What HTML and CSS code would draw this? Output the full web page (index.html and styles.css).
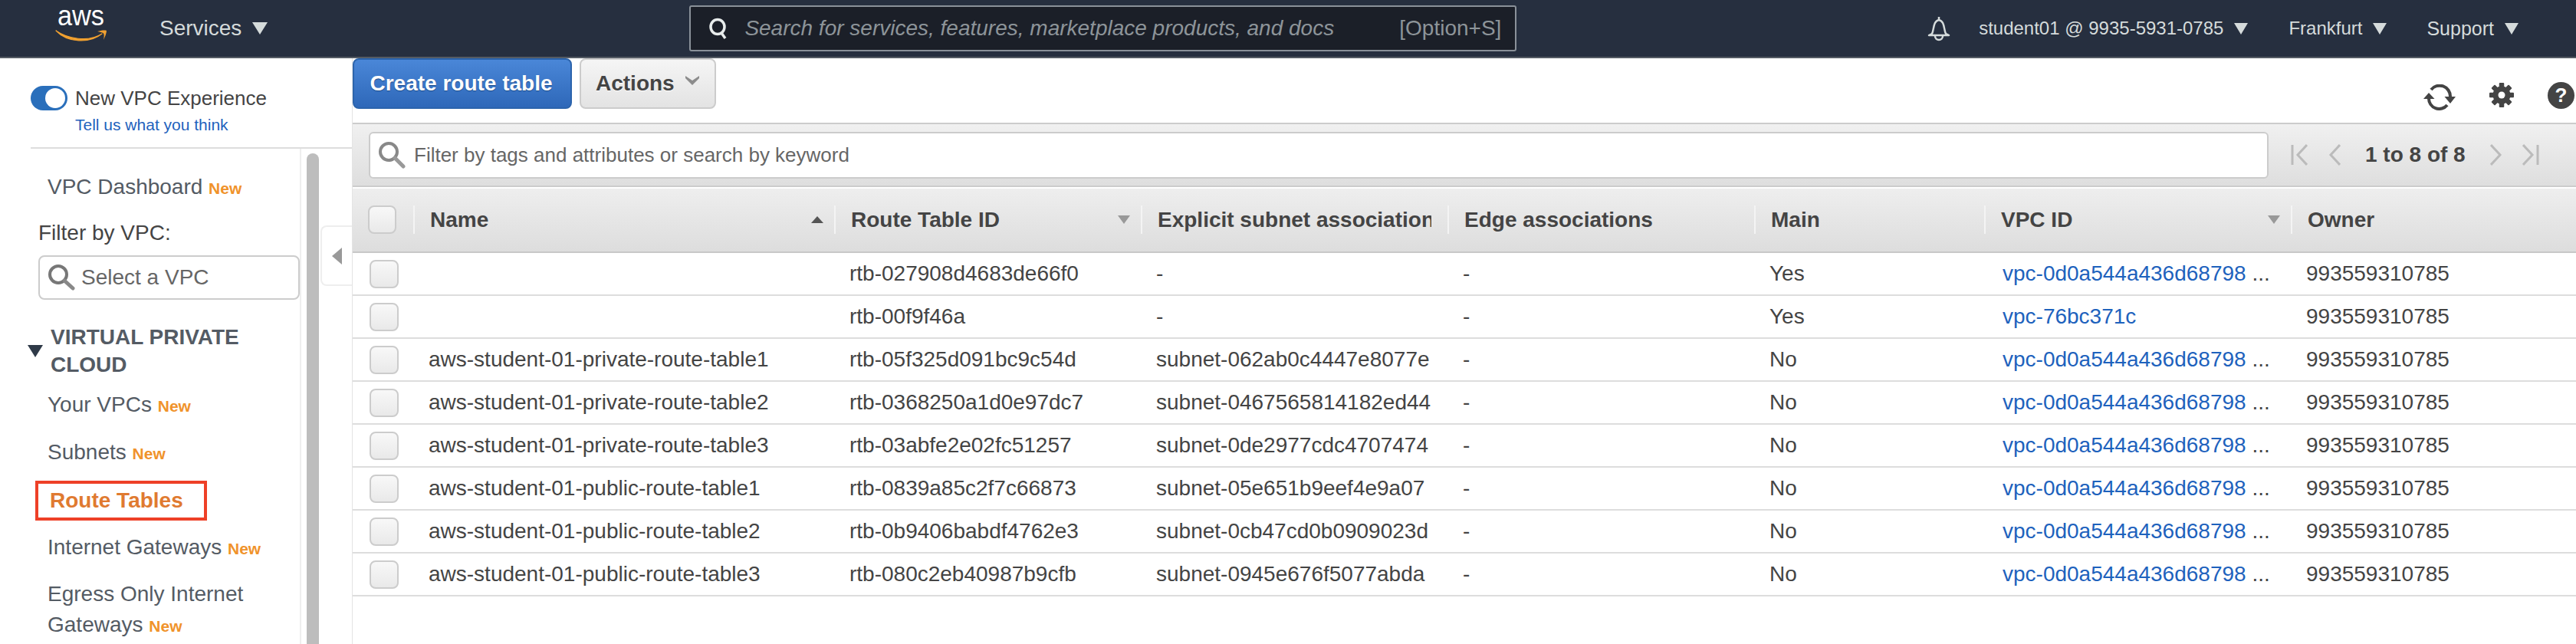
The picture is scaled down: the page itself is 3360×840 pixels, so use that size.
FILE: index.html
```html
<!DOCTYPE html>
<html lang="en">
<head>
<meta charset="utf-8">
<title>Route Tables</title>
<link rel="stylesheet" href="styles.css">
</head>
<body>
<header class="topbar">
  <svg class="logo" width="66" height="74" viewBox="0 0 66 74">
    <text x="2" y="33" textLength="61" lengthAdjust="spacingAndGlyphs" class="logo-text">aws</text>
    <path d="M0 40 C14 50 42 56 60 44 C44 57 15 56 0 40 Z" fill="#f0a030" stroke="#f0a030" stroke-width="1.2" stroke-linejoin="round"/>
    <path d="M54 41 C58 40 63 39 66 40 C66 43 64 48 62 52 C63 47 63 44 61.5 43 C60 42 57 42 54 41 Z" fill="#f0a030"/>
  </svg>
  <a class="services">Services<i class="caret caret-big"></i></a>
  <div class="omni">
    <svg class="omni-icon" width="28" height="28" viewBox="0 0 28 28"><ellipse cx="13" cy="12" rx="9" ry="9.5" fill="none" stroke="#e8ecec" stroke-width="3.5"/><path d="M18 20 L23 27" stroke="#e8ecec" stroke-width="3.5"/></svg>
    <span class="omni-text">Search for services, features, marketplace products, and docs</span>
    <span class="omni-key">[Option+S]</span>
  </div>
  <div class="top-right">
    <svg class="bell" width="32" height="34" viewBox="0 0 32 34"><path d="M16 2 V5 M7 24 C10 18 8 8 16 6 C24 8 22 18 25 24 L29 26 H3 Z" fill="none" stroke="#d5dbdb" stroke-width="2.5" stroke-linejoin="round"/><path d="M11 27 A5 5 0 0 0 21 27" fill="none" stroke="#d5dbdb" stroke-width="2.5"/></svg>
    <a class="top-link top-user">student01 @ 9935-5931-0785<i class="caret"></i></a>
    <a class="top-link top-region">Frankfurt<i class="caret"></i></a>
    <a class="top-link top-support">Support<i class="caret"></i></a>
  </div>
</header>

<div class="shell">
  <aside class="sidebar">
    <div class="exp">
      <div class="exp-row">
        <span class="toggle"><span class="knob"></span></span>
        <span class="exp-label">New VPC Experience</span>
      </div>
      <a class="exp-link">Tell us what you think</a>
    </div>
    <div class="nav-wrap">
      <nav class="nav">
        <a class="nav-item nav-first">VPC Dashboard <b class="new">New</b></a>
        <div class="filter-label">Filter by VPC:</div>
        <div class="select">
          <svg width="36" height="36" viewBox="0 0 36 36"><circle cx="14" cy="14" r="11" fill="#fff" stroke="#777" stroke-width="4"/><path d="M22 22 L33 32" stroke="#888" stroke-width="5" stroke-linecap="round"/></svg>
          <span>Select a VPC</span>
        </div>
        <div class="group"><i class="group-caret"></i><span>VIRTUAL PRIVATE CLOUD</span></div>
        <a class="nav-item">Your VPCs <b class="new">New</b></a>
        <a class="nav-item">Subnets <b class="new">New</b></a>
        <a class="nav-item nav-active"><span class="hl">Route Tables</span></a>
        <a class="nav-item">Internet Gateways <b class="new">New</b></a>
        <a class="nav-item nav-two">Egress Only Internet Gateways <b class="new">New</b></a>
      </nav>
      <div class="track"><div class="thumb"></div></div>
      <div class="collapse"><i class="collapse-caret"></i></div>
    </div>
  </aside>

  <main class="main">
    <div class="toolbar">
      <button class="btn btn-primary">Create route table</button>
      <button class="btn btn-actions">Actions<svg width="20" height="14" viewBox="0 0 20 14"><path d="M1 1 L10 7 L19 1 L19 4 L10 13 L1 4 Z" fill="#8c8c8c"/></svg></button>
      <div class="tools">
        <svg class="tool-sync" width="42" height="34" viewBox="0 0 42 34"><path d="M7 18 A13.5 13.5 0 0 0 31 27" fill="none" stroke="#444" stroke-width="4"/><path d="M35 16 A14 14 0 0 0 10 7" fill="none" stroke="#444" stroke-width="4"/><path d="M7 11 L14.5 19 L0 19 Z M35 25 L27.5 16 L42 16 Z" fill="#444"/></svg>
        <svg class="tool-gear" width="32" height="34" viewBox="0 0 32 34"><g fill="#444"><rect x="12.75" y="1" width="6.5" height="32" rx="1"/><rect x="12.75" y="1" width="6.5" height="32" rx="1" transform="rotate(45 16 17)"/><rect x="12.75" y="1" width="6.5" height="32" rx="1" transform="rotate(90 16 17)"/><rect x="12.75" y="1" width="6.5" height="32" rx="1" transform="rotate(135 16 17)"/><circle cx="16" cy="17" r="11.5"/></g><circle cx="16" cy="17" r="4.5" fill="#fff"/></svg>
        <span class="help">?</span>
      </div>
    </div>

    <div class="filterbar">
      <div class="search">
        <svg width="36" height="36" viewBox="0 0 36 36"><circle cx="14" cy="14" r="11" fill="#fff" stroke="#888" stroke-width="4"/><path d="M22 22 L33 33" stroke="#999" stroke-width="5" stroke-linecap="round"/></svg>
        <span>Filter by tags and attributes or search by keyword</span>
      </div>
      <div class="pager">
        <svg class="pg-first" width="22" height="28" viewBox="0 0 22 28"><path d="M2 1 V27 M21 1 L9 14 L21 27" fill="none" stroke="#bbb" stroke-width="3"/></svg>
        <svg class="pg-prev" width="16" height="28" viewBox="0 0 16 28"><path d="M15 1 L3 14 L15 27" fill="none" stroke="#bbb" stroke-width="3"/></svg>
        <span class="pg-text">1 to 8 of 8</span>
        <svg class="pg-next" width="16" height="28" viewBox="0 0 16 28"><path d="M1 1 L13 14 L1 27" fill="none" stroke="#bbb" stroke-width="3"/></svg>
        <svg class="pg-last" width="22" height="28" viewBox="0 0 22 28"><path d="M20 1 V27 M1 1 L13 14 L1 27" fill="none" stroke="#bbb" stroke-width="3"/></svg>
      </div>
    </div>

    <table class="grid">
      <colgroup>
        <col class="c-check"><col class="c-name"><col class="c-wide"><col class="c-wide"><col class="c-wide"><col class="c-main"><col class="c-wide"><col>
      </colgroup>
      <thead>
        <tr>
          <th class="th-check"><span class="check check-head"></span></th>
          <th><div class="th-in">Name<i class="sort sort-up"></i></div></th>
          <th><div class="th-in">Route Table ID<i class="sort sort-down"></i></div></th>
          <th><div class="th-in"><span class="th-clip">Explicit subnet associations</span></div></th>
          <th><div class="th-in">Edge associations</div></th>
          <th><div class="th-in">Main</div></th>
          <th><div class="th-in">VPC ID<i class="sort sort-down"></i></div></th>
          <th><div class="th-in">Owner</div></th>
        </tr>
      </thead>
      <tbody>
        <tr><td class="td-check"><span class="check"></span></td><td></td><td>rtb-027908d4683de66f0</td><td>-</td><td>-</td><td>Yes</td><td class="td-vpc"><a>vpc-0d0a544a436d68798</a> ...</td><td>993559310785</td></tr>
        <tr><td class="td-check"><span class="check"></span></td><td></td><td>rtb-00f9f46a</td><td>-</td><td>-</td><td>Yes</td><td class="td-vpc"><a>vpc-76bc371c</a></td><td>993559310785</td></tr>
        <tr><td class="td-check"><span class="check"></span></td><td>aws-student-01-private-route-table1</td><td>rtb-05f325d091bc9c54d</td><td>subnet-062ab0c4447e8077e</td><td>-</td><td>No</td><td class="td-vpc"><a>vpc-0d0a544a436d68798</a> ...</td><td>993559310785</td></tr>
        <tr><td class="td-check"><span class="check"></span></td><td>aws-student-01-private-route-table2</td><td>rtb-0368250a1d0e97dc7</td><td>subnet-0467565814182ed44</td><td>-</td><td>No</td><td class="td-vpc"><a>vpc-0d0a544a436d68798</a> ...</td><td>993559310785</td></tr>
        <tr><td class="td-check"><span class="check"></span></td><td>aws-student-01-private-route-table3</td><td>rtb-03abfe2e02fc51257</td><td>subnet-0de2977cdc4707474</td><td>-</td><td>No</td><td class="td-vpc"><a>vpc-0d0a544a436d68798</a> ...</td><td>993559310785</td></tr>
        <tr><td class="td-check"><span class="check"></span></td><td>aws-student-01-public-route-table1</td><td>rtb-0839a85c2f7c66873</td><td>subnet-05e651b9eef4e9a07</td><td>-</td><td>No</td><td class="td-vpc"><a>vpc-0d0a544a436d68798</a> ...</td><td>993559310785</td></tr>
        <tr><td class="td-check"><span class="check"></span></td><td>aws-student-01-public-route-table2</td><td>rtb-0b9406babdf4762e3</td><td>subnet-0cb47cd0b0909023d</td><td>-</td><td>No</td><td class="td-vpc"><a>vpc-0d0a544a436d68798</a> ...</td><td>993559310785</td></tr>
        <tr><td class="td-check"><span class="check"></span></td><td>aws-student-01-public-route-table3</td><td>rtb-080c2eb40987b9cfb</td><td>subnet-0945e676f5077abda</td><td>-</td><td>No</td><td class="td-vpc"><a>vpc-0d0a544a436d68798</a> ...</td><td>993559310785</td></tr>
      </tbody>
    </table>
  </main>
</div>
</body>
</html>
```

FILE: styles.css
```css
* { box-sizing: border-box; }
html, body { margin: 0; height: 840px; overflow: hidden; background: #fff; }
body { font-family: "Liberation Sans", Arial, sans-serif; font-size: 28px; color: #444; }
i { display: block; }

/* top bar */
.topbar { display: flex; align-items: center; height: 76px; padding-left: 73px; background: #262f3f; border-bottom: 2px solid #545b64; color: #d5dbdb; }
.logo { flex: none; overflow: visible; }
.logo-text { font-family: "Liberation Sans", Arial, sans-serif; font-size: 36px; fill: #fff; }
.services { display: flex; align-items: center; margin-left: 69px; font-size: 28px; }
.caret { width: 0; height: 0; margin-left: 14px; border-left: 9px solid transparent; border-right: 9px solid transparent; border-top: 15px solid #d5dbdb; }
.caret-big { border-left-width: 10px; border-right-width: 10px; border-top-width: 16px; }
.omni { display: flex; align-items: center; width: 1079px; height: 60px; margin-left: 550px; padding: 0 18px 0 22px; background: #1b1f28; border: 2px solid #8a9199; border-radius: 3px; color: #8d9499; font-size: 28px; }
.omni-icon { flex: none; }
.omni-text { margin-left: 20px; font-style: italic; }
.omni-key { margin-left: auto; }
.top-right { display: flex; align-items: center; margin-left: auto; padding-right: 75px; font-size: 24px; }
.bell { flex: none; }
.top-link { display: flex; align-items: center; }
.top-user { margin-left: 36px; }
.top-region { margin-left: 53px; }
.top-support { margin-left: 52px; font-size: 25px; }

/* shell */
.shell { display: flex; height: 764px; }
.sidebar { display: flex; flex-direction: column; flex: none; width: 460px; border-right: 1px solid #e4e4e4; }
.exp { height: 118px; margin-left: 40px; padding-top: 36px; border-bottom: 2px solid #ddd; }
.exp-row { display: flex; align-items: center; height: 32px; }
.toggle { display: block; width: 48px; height: 32px; padding: 3px 3px 3px 19px; background: #2a6fbb; border-radius: 16px; }
.knob { display: block; width: 26px; height: 26px; background: #fff; border-radius: 50%; }
.exp-label { margin-left: 10px; font-size: 26px; color: #444; }
.exp-link { display: block; margin-top: 7px; margin-left: 58px; font-size: 21px; color: #1e62bd; }
.nav-wrap { display: flex; flex: 1; min-height: 0; }
.nav { flex: none; width: 393px; height: 646px; overflow: hidden; border-right: 2px solid #eee; color: #545b64; }
.nav-item { display: block; padding: 13px 0 13px 62px; line-height: 36px; white-space: normal; }
.nav-first { margin-top: 19px; }
.new { font-size: 21px; line-height: 1; color: #f0932b; }
.filter-label { margin-top: 11px; margin-left: 50px; line-height: 36px; color: #444; }
.select { display: flex; align-items: center; width: 341px; height: 58px; margin-top: 11px; margin-left: 50px; padding-left: 10px; border: 2px solid #ccc; border-radius: 8px; color: #666; }
.select span { margin-left: 8px; }
.group { display: flex; align-items: center; margin: 31px 0 3px 36px; width: 320px; font-weight: bold; line-height: 36px; }
.group-caret { flex: none; width: 0; height: 0; margin-right: 10px; border-left: 10px solid transparent; border-right: 10px solid transparent; border-top: 16px solid #2f3a48; }
.nav-active { padding: 6px 0 4px 46px; height: 62px; }
.hl { display: block; width: 224px; height: 52px; padding-left: 15px; border: 4px solid #ee4027; font-weight: bold; line-height: 44px; color: #e07a30; }
.nav-two { padding: 10px 40px 0 62px; line-height: 40px; }
.track { flex: none; width: 25px; height: 646px; overflow: hidden; padding: 6px 2px 0 7px; }
.thumb { width: 16px; height: 640px; background: #bdbdbd; border-radius: 8px 8px 0 0; }
.collapse { display: flex; align-items: center; justify-content: center; flex: none; width: 41px; height: 79px; margin-top: 100px; border: 2px solid #eee; border-right: 0; border-radius: 8px 0 0 8px; }
.collapse-caret { width: 0; height: 0; border-top: 11px solid transparent; border-bottom: 11px solid transparent; border-right: 13px solid #999; }

/* main */
.main { flex: 1; min-width: 0; }
.toolbar { display: flex; align-items: flex-start; height: 84px; }
.btn { height: 66px; padding: 0; font-family: inherit; font-size: 28px; font-weight: bold; border-radius: 8px; }
.btn-primary { width: 286px; padding-right: 3px; color: #fff; background: linear-gradient(#4a87d8, #2e68b9); border: 2px solid #2c64ac; text-shadow: 0 1px 1px #1d4a86; }
.btn-actions { display: flex; align-items: center; width: 178px; margin-left: 10px; padding-left: 19px; color: #444; background: linear-gradient(#f5f5f5, #e3e3e3); border: 2px solid #ccc; text-shadow: 0 1px 0 #fff; }
.btn-actions svg { margin-left: 13px; margin-top: -8px; }
.tools { display: flex; align-items: flex-start; margin-left: auto; padding-top: 31px; padding-right: 2px; }
.tool-sync { margin-top: 3px; }
.tool-gear { margin-left: 44px; }
.help { display: block; width: 35px; height: 35px; margin-left: 44px; background: #444; border-radius: 50%; color: #fff; font-size: 26px; font-weight: bold; line-height: 35px; text-align: center; }

.filterbar { display: flex; align-items: center; height: 84px; padding-left: 21px; background: linear-gradient(#f0f0f0, #dedede); border-top: 2px solid #ccc; border-bottom: 2px solid #ccc; }
.search { display: flex; align-items: center; width: 2478px; height: 61px; padding-left: 10px; background: #fff; border: 2px solid #ccc; border-radius: 6px; color: #666; font-size: 26px; }
.search span { margin-left: 11px; }
.pager { display: flex; align-items: center; margin-left: 29px; }
.pg-prev { margin-left: 27px; }
.pg-text { margin-left: 32px; font-weight: bold; color: #444; }
.pg-next { margin-left: 32px; }
.pg-last { margin-left: 26px; }

/* table */
.grid { width: 100%; margin-top: 2px; border-collapse: separate; border-spacing: 0; table-layout: fixed; font-size: 28px; }
.c-check { width: 79px; }
.c-name { width: 549px; }
.c-wide { width: 400px; }
.c-main { width: 300px; }
th { height: 84px; padding: 22px 0 0; vertical-align: top; text-align: left; background: linear-gradient(#eee, #ddd); border-bottom: 2px solid #c8c8c8; }
.th-check { padding-left: 20px; }
.th-in { display: flex; align-items: center; justify-content: space-between; height: 37px; padding: 0 14px 0 20px; overflow: hidden; white-space: nowrap; border-left: 2px solid #f4f4f4; }
.th-clip { display: block; min-width: 0; margin-right: 7px; overflow: hidden; }
.sort { flex: none; width: 0; height: 0; border-left: 8px solid transparent; border-right: 8px solid transparent; }
.sort-up { border-bottom: 9px solid #555; }
.sort-down { border-top: 11px solid #999; }
td { height: 56px; padding: 0 0 0 20px; overflow: hidden; white-space: nowrap; border-bottom: 2px solid #ddd; color: #444; }
.td-vpc { padding-left: 24px; }
.td-vpc a { color: #1e62bd; }
td.td-check { padding-left: 22px; }
.check { display: block; width: 38px; height: 37px; background: linear-gradient(#f8f8f8, #e9e9e9); border: 2px solid #ccc; border-radius: 8px; }
.check-head { width: 37px; }
```
